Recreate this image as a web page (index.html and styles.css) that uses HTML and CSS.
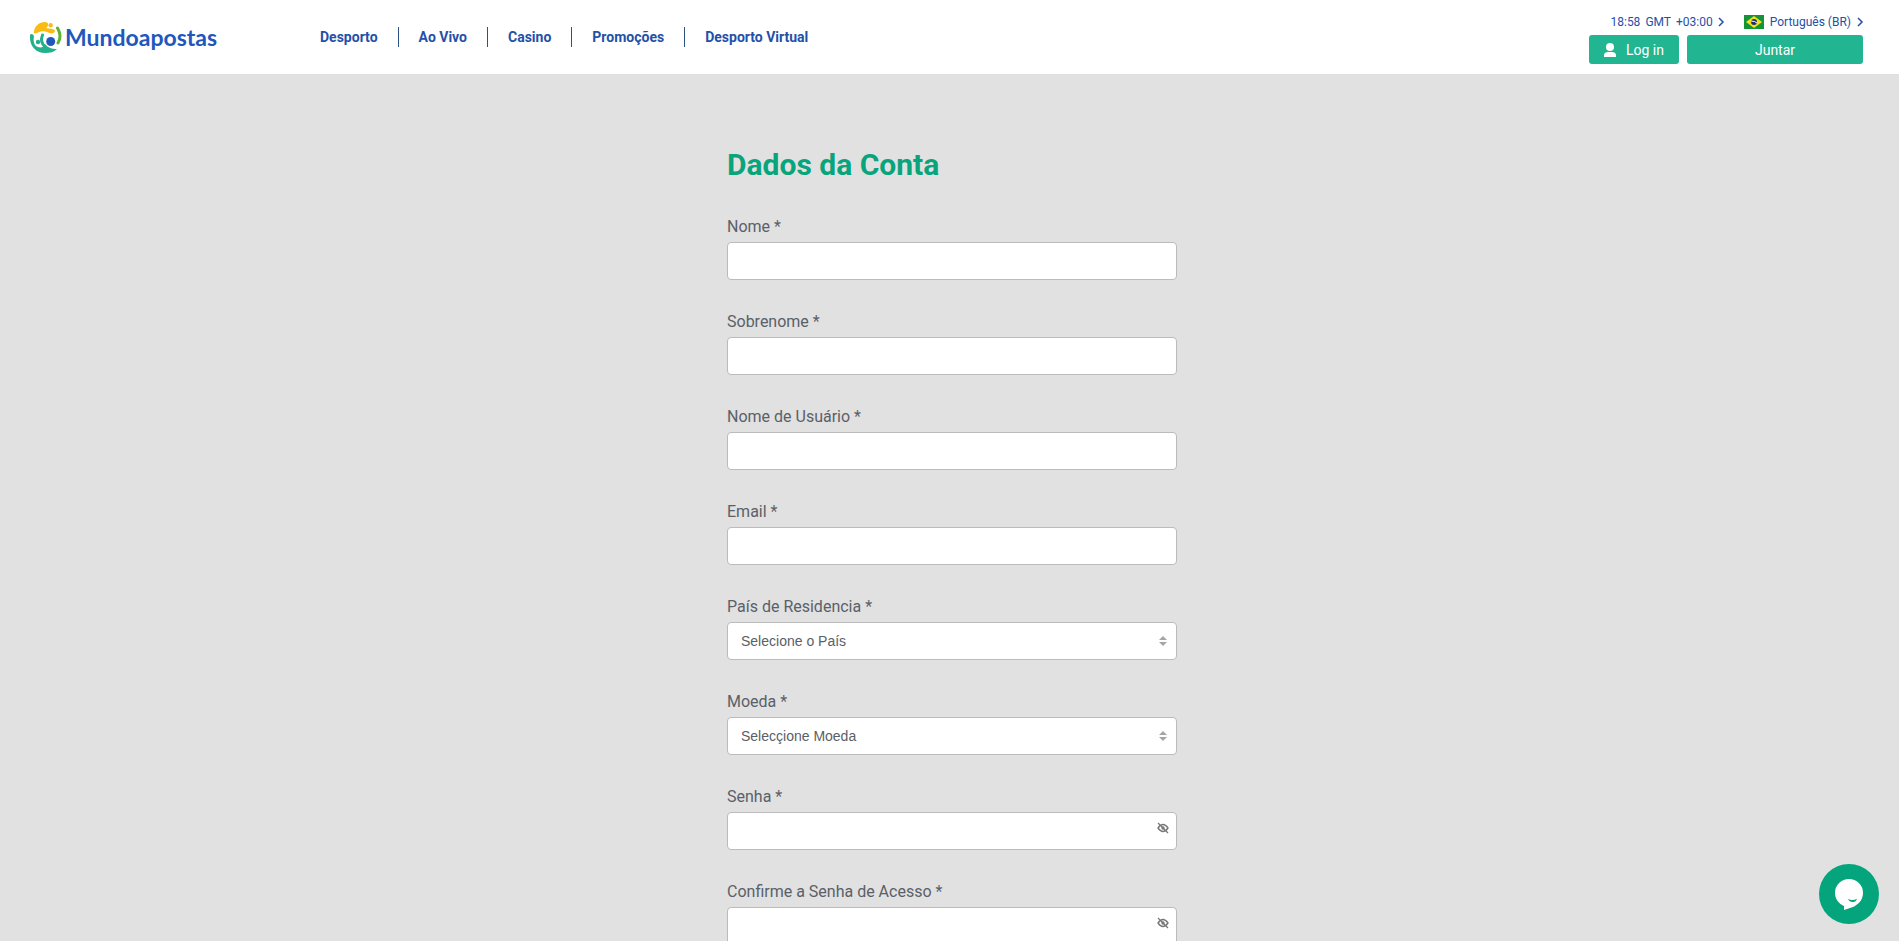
FILE: index.html
```html
<!DOCTYPE html>
<html lang="pt-BR">
<head>
    <meta charset="UTF-8">
    <meta name="viewport" content="width=device-width, initial-scale=1.0">
    <title>Mundoapostas</title>
    <link rel="stylesheet" href="styles.css">
</head>
<body>
    <header class="header">
        <a href="#" class="logo">
            <svg class="logo-icon" viewBox="0 0 32 32" aria-hidden="true">
                <path d="M4 10C5 5 9 1 15 1c4 0 4 4 1 6 3 1 8 0 9 3 0 3-5 3-8 1-3-1-5-1-8 0-3 2-6 2-5-1z" fill="#f9bc15"/>
                <circle cx="20.700" cy="4.300" r="2.200" fill="#f9bc15"/>
                <path d="M27.500 7c3 5 3.500 10 .5 15" fill="none" stroke="#5cb531" stroke-width="3" stroke-linecap="round"/>
                <path d="M0 14c-1 10 5 18 15 18 5 0 9-1 12-4-5 0-9-1-12-5-1 3-4 4-7 3-4-1-5-6-4-11-1-2-3-3-4-1z" fill="#22b18c"/>
                <circle cx="8" cy="21" r="2.200" fill="#22b18c"/>
                <path d="M12.500 14c-2 5-1 9 3 12" fill="none" stroke="#22b18c" stroke-width="3" stroke-linecap="round"/>
                <circle cx="20.700" cy="20.500" r="4.500" fill="#2156bd"/>
            </svg>
            <span>Mundoapostas</span>
        </a>
        <nav class="nav">
            <a href="#">Desporto</a>
            <a href="#">Ao Vivo</a>
            <a href="#">Casino</a>
            <a href="#">Promoções</a>
            <a href="#">Desporto Virtual</a>
        </nav>
        <div class="user-area">
            <div class="settings">
                <a href="#" class="clock">
                    <span>18:58</span><span>GMT</span><span>+03:00</span>
                    <svg class="chevron" viewBox="0 0 6 8"><path d="M1 0l4 4-4 4" /></svg>
                </a>
                <a href="#" class="lang">
                    <svg class="flag" viewBox="0 0 20 14" aria-hidden="true">
                        <rect width="20" height="14" fill="#149338"/>
                        <path d="M10 1l8 6-8 6-8-6z" fill="#f7e017"/>
                        <circle cx="10" cy="7" r="3" fill="#20316f"/>
                        <path d="M7 6q4 0 6 2" fill="none" stroke="#fff"/>
                    </svg>
                    <span>Português (BR)</span>
                    <svg class="chevron" viewBox="0 0 6 8"><path d="M1 0l4 4-4 4" /></svg>
                </a>
            </div>
            <div class="buttons">
                <button type="button" class="btn btn-login">
                    <svg viewBox="0 0 12 14" aria-hidden="true"><circle cx="6" cy="4" r="4"/><path d="M0 14v-2c0-2 2-3 4-3h4c2 0 4 1 4 3v2z"/></svg>
                    Log in
                </button>
                <button type="button" class="btn btn-join">Juntar</button>
            </div>
        </div>
    </header>

    <main class="main">
        <form class="form">
            <h1>Dados da Conta</h1>
            <div class="field">
                <label for="nome">Nome *</label>
                <input type="text" id="nome">
            </div>
            <div class="field">
                <label for="sobrenome">Sobrenome *</label>
                <input type="text" id="sobrenome">
            </div>
            <div class="field">
                <label for="usuario">Nome de Usuário *</label>
                <input type="text" id="usuario">
            </div>
            <div class="field">
                <label for="email">Email *</label>
                <input type="email" id="email">
            </div>
            <div class="field">
                <label for="pais">País de Residencia *</label>
                <div class="control">
                    <select id="pais">
                        <option>Selecione o País</option>
                    </select>
                    <svg class="arrows" viewBox="0 0 8 10" aria-hidden="true"><path d="M4 0l4 4H0zM4 10l4-4H0z"/></svg>
                </div>
            </div>
            <div class="field">
                <label for="moeda">Moeda *</label>
                <div class="control">
                    <select id="moeda">
                        <option>Selecçione Moeda</option>
                    </select>
                    <svg class="arrows" viewBox="0 0 8 10" aria-hidden="true"><path d="M4 0l4 4H0zM4 10l4-4H0z"/></svg>
                </div>
            </div>
            <div class="field">
                <label for="senha">Senha *</label>
                <div class="control">
                    <input type="password" id="senha">
                    <button type="button" class="toggle" aria-label="Mostrar senha">
                        <svg viewBox="0 0 12 10"><path d="M1 5q5-7 10 0-5 7-10 0z"/><circle cx="6" cy="5" r="1"/><path d="M1 0l10 10"/></svg>
                    </button>
                </div>
            </div>
            <div class="field">
                <label for="senha2">Confirme a Senha de Acesso *</label>
                <div class="control">
                    <input type="password" id="senha2">
                    <button type="button" class="toggle" aria-label="Mostrar senha">
                        <svg viewBox="0 0 12 10"><path d="M1 5q5-7 10 0-5 7-10 0z"/><circle cx="6" cy="5" r="1"/><path d="M1 0l10 10"/></svg>
                    </button>
                </div>
            </div>
        </form>
    </main>

    <button type="button" class="chat" aria-label="Chat">
        <svg viewBox="0 0 60 60">
            <path d="M30 15a14 14 0 0 1 14 14c0 8-6 12-10 14l-9 3v-4c-5-2-9-7-9-13a14 14 0 0 1 14-14z" fill="#fff"/>
            <path d="M29 35q4 2 9 0-1 3-4 3-4 0-5-3z" fill="#04a57c"/>
        </svg>
    </button>
</body>
</html>
```

FILE: styles.css
```css
* {
    box-sizing: border-box;
}
body {
    margin: 0;
    background: #e1e1e1;
    font-family: Roboto, sans-serif;
    color: #5a6067;
}
a {
    color: #2450a8;
    text-decoration: none;
}
button {
    border: 0;
    padding: 0;
    cursor: pointer;
    font-family: inherit;
}
.header {
    display: flex;
    align-items: center;
    height: 74px;
    padding: 0 36px 0 30px;
    background: #fff;
}
.logo {
    display: flex;
    align-items: center;
    gap: 3px;
    width: 270px;
    font-family: Lato, sans-serif;
    font-size: 23px;
    font-weight: 700;
    color: #2156bd;
}
.logo-icon {
    width: 32px;
    height: 32px;
}
.nav {
    display: flex;
}
.nav a {
    padding: 0 20px;
    font-size: 14px;
    font-weight: 700;
    line-height: 20px;
}
.nav a + a {
    border-left: 1px solid #2c5285;
}
.user-area {
    margin-left: auto;
    padding-top: 4px;
}
.settings {
    display: flex;
    justify-content: flex-end;
    gap: 20px;
    margin-bottom: 5px;
    font-size: 12px;
    line-height: 16px;
}
.clock, .lang {
    display: flex;
    align-items: center;
    gap: 5px;
}
.lang {
    gap: 6px;
}
.flag {
    width: 20px;
    height: 14px;
}
.chevron {
    width: 6px;
    height: 8px;
    overflow: visible;
    fill: none;
    stroke: #2450a8;
    stroke-width: 1.5;
}
.buttons {
    display: flex;
    gap: 8px;
}
.btn {
    display: flex;
    align-items: center;
    justify-content: center;
    gap: 10px;
    height: 29px;
    border-radius: 3px;
    background: #22b592;
    color: #fff;
    font-size: 14px;
}
.btn svg {
    width: 12px;
    height: 14px;
    fill: #fff;
}
.btn-login {
    width: 90px;
}
.btn-join {
    width: 176px;
}
.main {
    padding: 72px 0 0 5px;
}
.form {
    max-width: 450px;
    margin: 0 auto;
}
h1 {
    margin: 0 0 31px;
    font-size: 30px;
    line-height: 38px;
    color: #08a47c;
}
.field {
    margin-bottom: 30px;
}
.field:last-child {
    margin-bottom: 0;
}
.field label {
    display: block;
    margin-bottom: 3px;
    font-size: 16px;
    line-height: 24px;
}
.control {
    position: relative;
}
input, select {
    display: block;
    width: 100%;
    height: 38px;
    padding: 0 13px;
    border: 1px solid #bbb;
    border-radius: 4px;
    background: #fff;
    font-family: "Liberation Sans", sans-serif;
    font-size: 14px;
    color: #5a6067;
}
select {
    appearance: none;
}
.arrows {
    position: absolute;
    top: 14px;
    right: 10px;
    width: 8px;
    height: 10px;
    fill: #a5a5a5;
    pointer-events: none;
}
.toggle {
    position: absolute;
    top: 10px;
    right: 8px;
    display: flex;
    background: none;
}
.toggle svg {
    width: 12px;
    height: 12px;
    fill: none;
    stroke: #777;
    stroke-width: 1.3;
}
.chat {
    position: fixed;
    right: 20px;
    bottom: 17px;
    width: 60px;
    height: 60px;
    border-radius: 50%;
    background: #04a57c;
}
.chat svg {
    display: block;
}
```
